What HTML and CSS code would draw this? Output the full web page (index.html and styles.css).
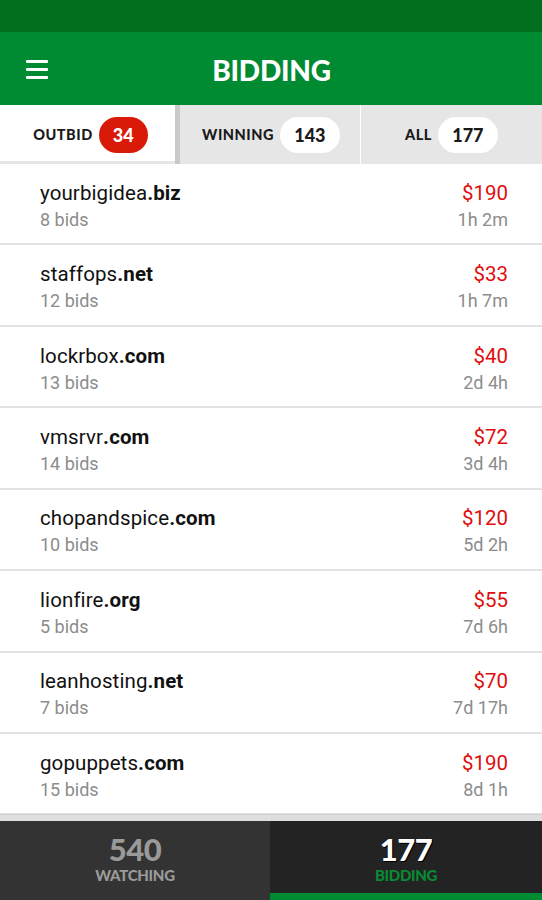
FILE: index.html
```html
<!DOCTYPE html>
<html>
<head>
<meta charset="utf-8">
<link rel="stylesheet" href="styles.css">
</head>
<body>
<div class="app">
  <div class="statusbar"></div>
  <header class="toolbar">
    <div class="menu"><span></span><span></span><span></span></div>
    <h1 class="title">BIDDING</h1>
  </header>
  <nav class="tabs">
    <div class="tab tab-active"><span class="tab-label">OUTBID</span><span class="badge badge-red">34</span></div>
    <div class="tab-sep"></div>
    <div class="tab"><span class="tab-label">WINNING</span><span class="badge">143</span></div>
    <div class="tab-line"></div>
    <div class="tab"><span class="tab-label">ALL</span><span class="badge">177</span></div>
  </nav>
  <ul class="list">
    <li class="row"><div class="left"><div class="domain">yourbigidea<b>.biz</b></div><div class="sub">8 bids</div></div><div class="right"><div class="price">$190</div><div class="sub">1h 2m</div></div></li>
    <li class="row"><div class="left"><div class="domain">staffops<b>.net</b></div><div class="sub">12 bids</div></div><div class="right"><div class="price">$33</div><div class="sub">1h 7m</div></div></li>
    <li class="row"><div class="left"><div class="domain">lockrbox<b>.com</b></div><div class="sub">13 bids</div></div><div class="right"><div class="price">$40</div><div class="sub">2d 4h</div></div></li>
    <li class="row"><div class="left"><div class="domain">vmsrvr<b>.com</b></div><div class="sub">14 bids</div></div><div class="right"><div class="price">$72</div><div class="sub">3d 4h</div></div></li>
    <li class="row"><div class="left"><div class="domain">chopandspice<b>.com</b></div><div class="sub">10 bids</div></div><div class="right"><div class="price">$120</div><div class="sub">5d 2h</div></div></li>
    <li class="row"><div class="left"><div class="domain">lionfire<b>.org</b></div><div class="sub">5 bids</div></div><div class="right"><div class="price">$55</div><div class="sub">7d 6h</div></div></li>
    <li class="row"><div class="left"><div class="domain">leanhosting<b>.net</b></div><div class="sub">7 bids</div></div><div class="right"><div class="price">$70</div><div class="sub">7d 17h</div></div></li>
    <li class="row"><div class="left"><div class="domain">gopuppets<b>.com</b></div><div class="sub">15 bids</div></div><div class="right"><div class="price">$190</div><div class="sub">8d 1h</div></div></li>
  </ul>
  <div class="shadow"></div>
  <footer class="bottom">
    <div class="bt"><div class="bt-num">540</div><div class="bt-label">WATCHING</div></div>
    <div class="bt bt-active"><div class="bt-num">177</div><div class="bt-label">BIDDING</div></div>
  </footer>
</div>
</body>
</html>
```
FILE: styles.css
```css
* { box-sizing: border-box; }
html, body { margin: 0; padding: 0; background: #fff; }
.app { width: 542px; height: 900px; display: flex; flex-direction: column; overflow: hidden; font-family: Roboto, "Noto Sans", sans-serif; }
.statusbar { height: 32px; background: #026f1f; flex: none; }
.toolbar { height: 73px; background: #008a32; flex: none; display: flex; align-items: center; position: relative; }
.menu { width: 22px; margin-left: 26px; display: flex; flex-direction: column; gap: 5px; margin-top: 1px; }
.menu span { display: block; height: 3px; background: #fff; border-radius: 1px; }
.title { position: absolute; left: 0; right: 0; text-align: center; margin: 0; color: #fff; font-family: Lato, sans-serif; font-weight: 900; font-size: 28px; letter-spacing: -0.2px; padding-left: 1px; top: 50%; transform: translateY(-50%); line-height: 1; margin-top: 1px; }
.tabs { height: 59px; flex: none; display: flex; background: #e6e6e6; }
.tab { flex: none; display: flex; align-items: center; justify-content: center; gap: 6px; height: 100%; }
.tabs .tab:nth-child(1) { width: 175px; background: #fff; border-bottom: 3px solid #e6e6e6; padding-top: 3px; padding-left: 6px; }
.tabs .tab:nth-child(3) { width: 180px; padding-left: 2px; }
.tabs .tab:nth-child(5) { width: 181px; }
.tab-sep { width: 5px; background: #c9c9c9; flex: none; }
.tab-line { width: 1px; background: #fff; flex: none; }
.tab-label { font-family: Lato, sans-serif; font-weight: 900; font-size: 14.5px; color: #1a1a1a; letter-spacing: 0.5px; }
.badge { height: 36px; min-width: 60px; padding: 0 12px; border-radius: 18px; background: #fff; color: #1a1a1a; font-family: Lato, sans-serif; font-weight: 900; font-size: 18px; display: flex; align-items: center; justify-content: center; }
.badge-red { background: #da1a08; color: #fff; min-width: 49px; }
.list { list-style: none; margin: 0; padding: 0; flex: none; }
.row { height: 81.43px; border-bottom: 2px solid #e2e2e2; display: flex; justify-content: space-between; align-items: center; padding: 5px 34px 0 40px; }
.domain { font-size: 20.5px; color: #111; line-height: 24px; letter-spacing: 0.1px; }
.domain b { font-weight: 700; }
.sub { font-size: 18px; color: #8c8c8c; line-height: 24px; margin-top: 3px; }
.right { text-align: right; }
.price { font-size: 20.5px; color: #e00d0d; line-height: 24px; }
.shadow { height: 7px; flex: none; background: #dedede; border-top: 1px solid #d0d0d0; margin-top: -1px; }
.bottom { flex: 1; display: flex; background: #333; }
.bt { width: 270px; flex: none; display: flex; flex-direction: column; align-items: center; padding-top: 12px; background: #333; }
.bt-active { width: 272px; background: #232323; border-bottom: 7px solid #008a32; }
.bt-num { font-family: Lato, sans-serif; font-weight: 900; font-size: 31px; line-height: 32px; color: #9a9a9a; letter-spacing: -0.5px; }
.bt-label { font-family: Lato, sans-serif; font-weight: 900; font-size: 15px; line-height: 18px; color: #9a9a9a; letter-spacing: -0.3px; margin-top: 1px; }
.bt-active .bt-num { color: #fff; text-shadow: 0 0 1px #000, 1px 1px 0 #000; }
.bt-active .bt-label { color: #0a8a34; }
```
